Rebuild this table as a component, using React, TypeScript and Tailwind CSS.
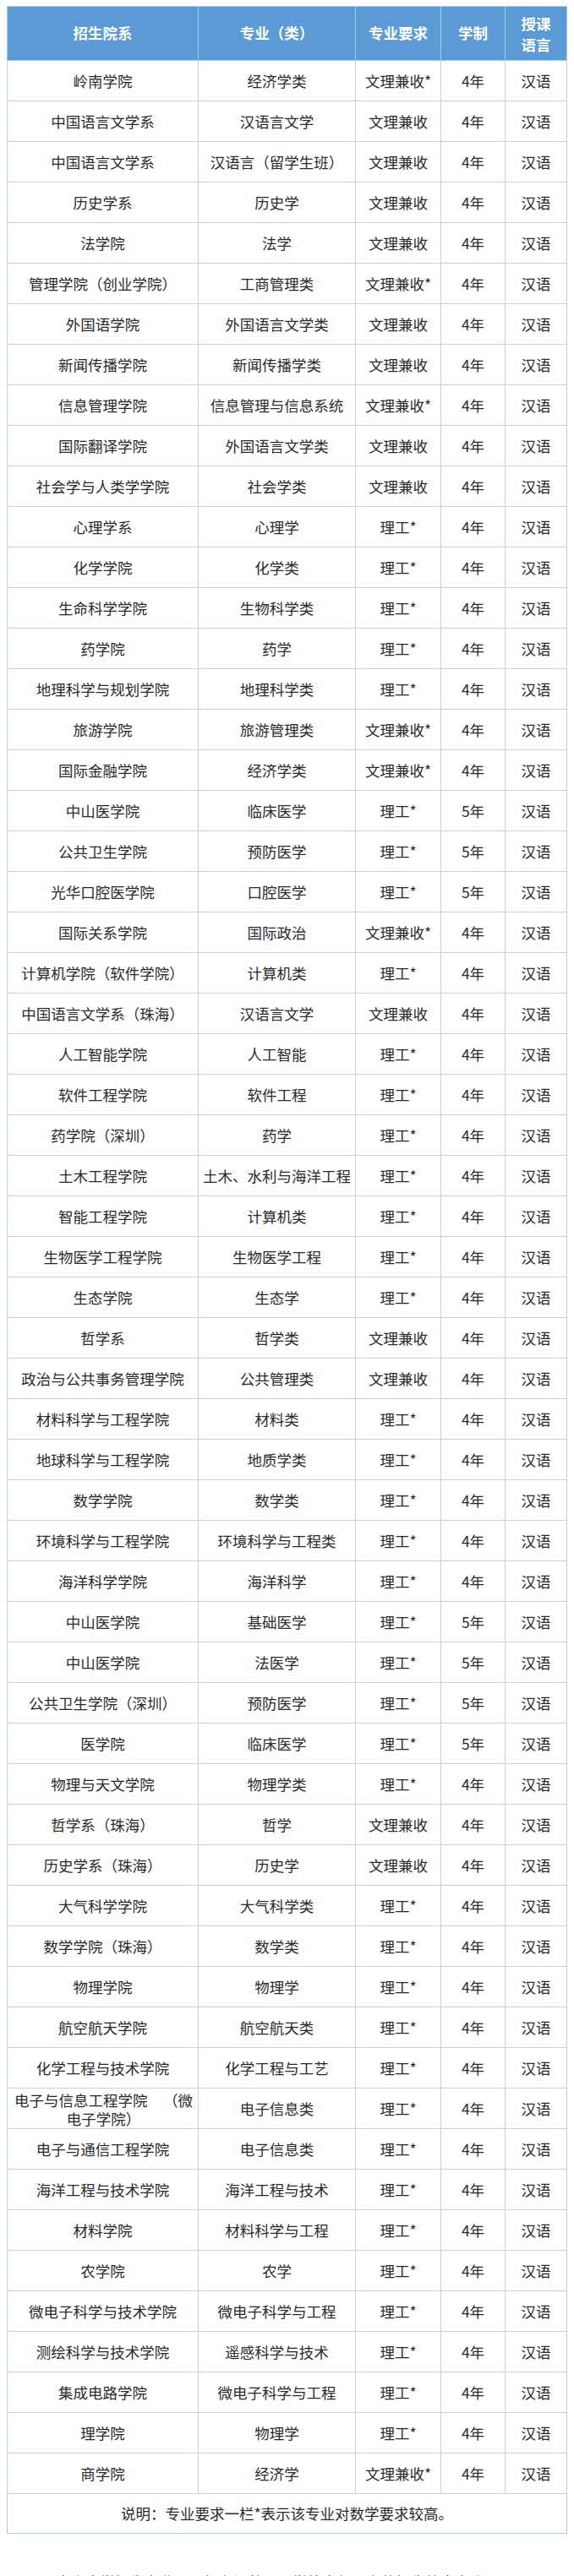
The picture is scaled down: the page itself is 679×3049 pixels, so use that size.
const rows: [string, string, string, string][] = [
  ["岭南学院", "经济学类", "文理兼收*", "4年"],
  ["中国语言文学系", "汉语言文学", "文理兼收", "4年"],
  ["中国语言文学系", "汉语言（留学生班）", "文理兼收", "4年"],
  ["历史学系", "历史学", "文理兼收", "4年"],
  ["法学院", "法学", "文理兼收", "4年"],
  ["管理学院（创业学院）", "工商管理类", "文理兼收*", "4年"],
  ["外国语学院", "外国语言文学类", "文理兼收", "4年"],
  ["新闻传播学院", "新闻传播学类", "文理兼收", "4年"],
  ["信息管理学院", "信息管理与信息系统", "文理兼收*", "4年"],
  ["国际翻译学院", "外国语言文学类", "文理兼收", "4年"],
  ["社会学与人类学学院", "社会学类", "文理兼收", "4年"],
  ["心理学系", "心理学", "理工*", "4年"],
  ["化学学院", "化学类", "理工*", "4年"],
  ["生命科学学院", "生物科学类", "理工*", "4年"],
  ["药学院", "药学", "理工*", "4年"],
  ["地理科学与规划学院", "地理科学类", "理工*", "4年"],
  ["旅游学院", "旅游管理类", "文理兼收*", "4年"],
  ["国际金融学院", "经济学类", "文理兼收*", "4年"],
  ["中山医学院", "临床医学", "理工*", "5年"],
  ["公共卫生学院", "预防医学", "理工*", "5年"],
  ["光华口腔医学院", "口腔医学", "理工*", "5年"],
  ["国际关系学院", "国际政治", "文理兼收*", "4年"],
  ["计算机学院（软件学院）", "计算机类", "理工*", "4年"],
  ["中国语言文学系（珠海）", "汉语言文学", "文理兼收", "4年"],
  ["人工智能学院", "人工智能", "理工*", "4年"],
  ["软件工程学院", "软件工程", "理工*", "4年"],
  ["药学院（深圳）", "药学", "理工*", "4年"],
  ["土木工程学院", "土木、水利与海洋工程", "理工*", "4年"],
  ["智能工程学院", "计算机类", "理工*", "4年"],
  ["生物医学工程学院", "生物医学工程", "理工*", "4年"],
  ["生态学院", "生态学", "理工*", "4年"],
  ["哲学系", "哲学类", "文理兼收", "4年"],
  ["政治与公共事务管理学院", "公共管理类", "文理兼收", "4年"],
  ["材料科学与工程学院", "材料类", "理工*", "4年"],
  ["地球科学与工程学院", "地质学类", "理工*", "4年"],
  ["数学学院", "数学类", "理工*", "4年"],
  ["环境科学与工程学院", "环境科学与工程类", "理工*", "4年"],
  ["海洋科学学院", "海洋科学", "理工*", "4年"],
  ["中山医学院", "基础医学", "理工*", "5年"],
  ["中山医学院", "法医学", "理工*", "5年"],
  ["公共卫生学院（深圳）", "预防医学", "理工*", "5年"],
  ["医学院", "临床医学", "理工*", "5年"],
  ["物理与天文学院", "物理学类", "理工*", "4年"],
  ["哲学系（珠海）", "哲学", "文理兼收", "4年"],
  ["历史学系（珠海）", "历史学", "文理兼收", "4年"],
  ["大气科学学院", "大气科学类", "理工*", "4年"],
  ["数学学院（珠海）", "数学类", "理工*", "4年"],
  ["物理学院", "物理学", "理工*", "4年"],
  ["航空航天学院", "航空航天类", "理工*", "4年"],
  ["化学工程与技术学院", "化学工程与工艺", "理工*", "4年"],
  ["电子与信息工程学院（微电子学院）", "电子信息类", "理工*", "4年"],
  ["电子与通信工程学院", "电子信息类", "理工*", "4年"],
  ["海洋工程与技术学院", "海洋工程与技术", "理工*", "4年"],
  ["材料学院", "材料科学与工程", "理工*", "4年"],
  ["农学院", "农学", "理工*", "4年"],
  ["微电子科学与技术学院", "微电子科学与工程", "理工*", "4年"],
  ["测绘科学与技术学院", "遥感科学与技术", "理工*", "4年"],
  ["集成电路学院", "微电子科学与工程", "理工*", "4年"],
  ["理学院", "物理学", "理工*", "4年"],
  ["商学院", "经济学", "文理兼收*", "4年"],
];

const th = "border border-[#a9c9e8] bg-[#5b9bd5] text-white font-bold text-center p-0";
const td = "border border-[#c3d3df] h-[48px] text-center p-0 leading-[22px]";

// the one long name wraps in the source: first line spread out, second centred
function School({ name }: { name: string }) {
  if (name === "电子与信息工程学院（微电子学院）") {
    return (
      <div className="pl-[8px] pr-[6px] pt-[2px]">
        <div className="flex justify-between">
          <span>电子与信息工程学院</span>
          <span>（微</span>
        </div>
        <div className="text-center">电子学院）</div>
      </div>
    );
  }
  return <>{name}</>;
}

export default function App() {
  return (
    <div className="bg-white w-[679px] h-[3049px] overflow-hidden pt-[7px] font-['Noto_Sans_CJK_SC',sans-serif] text-[17.5px] text-[#2a2a2a]">
      <table className="ml-[8px] w-[662px] table-fixed border-collapse border border-[#b5c8d6]">
        <colgroup>
          <col className="w-[226px]" />
          <col className="w-[186px]" />
          <col className="w-[101px]" />
          <col className="w-[76px]" />
          <col className="w-[73px]" />
        </colgroup>
        <thead>
          <tr className="h-[64px]">
            <th className={th}>招生院系</th>
            <th className={th}>专业（类）</th>
            <th className={th}>专业要求</th>
            <th className={th}>学制</th>
            <th className={`${th} leading-[25px]`}>
              授课
              <br />
              语言
            </th>
          </tr>
        </thead>
        <tbody>
          {rows.map((r, i) => (
            <tr key={i}>
              <td className={td}>
                <School name={r[0]} />
              </td>
              <td className={td}>{r[1]}</td>
              <td className={td}>{r[2]}</td>
              <td className={td}>{r[3]}</td>
              <td className={td}>汉语</td>
            </tr>
          ))}
          <tr>
            <td colSpan={5} className="border border-[#b5c8d6] h-[47px] text-center p-0">
              说明：专业要求一栏*表示该专业对数学要求较高。
            </td>
          </tr>
        </tbody>
      </table>
      <p className="mt-[46px] pl-[66px] pr-[20px] text-[17.5px] leading-[22px] whitespace-nowrap">
        中山大学招生专业目录如有调整，以学校当年公布的招生简章为准。
      </p>
    </div>
  );
}
